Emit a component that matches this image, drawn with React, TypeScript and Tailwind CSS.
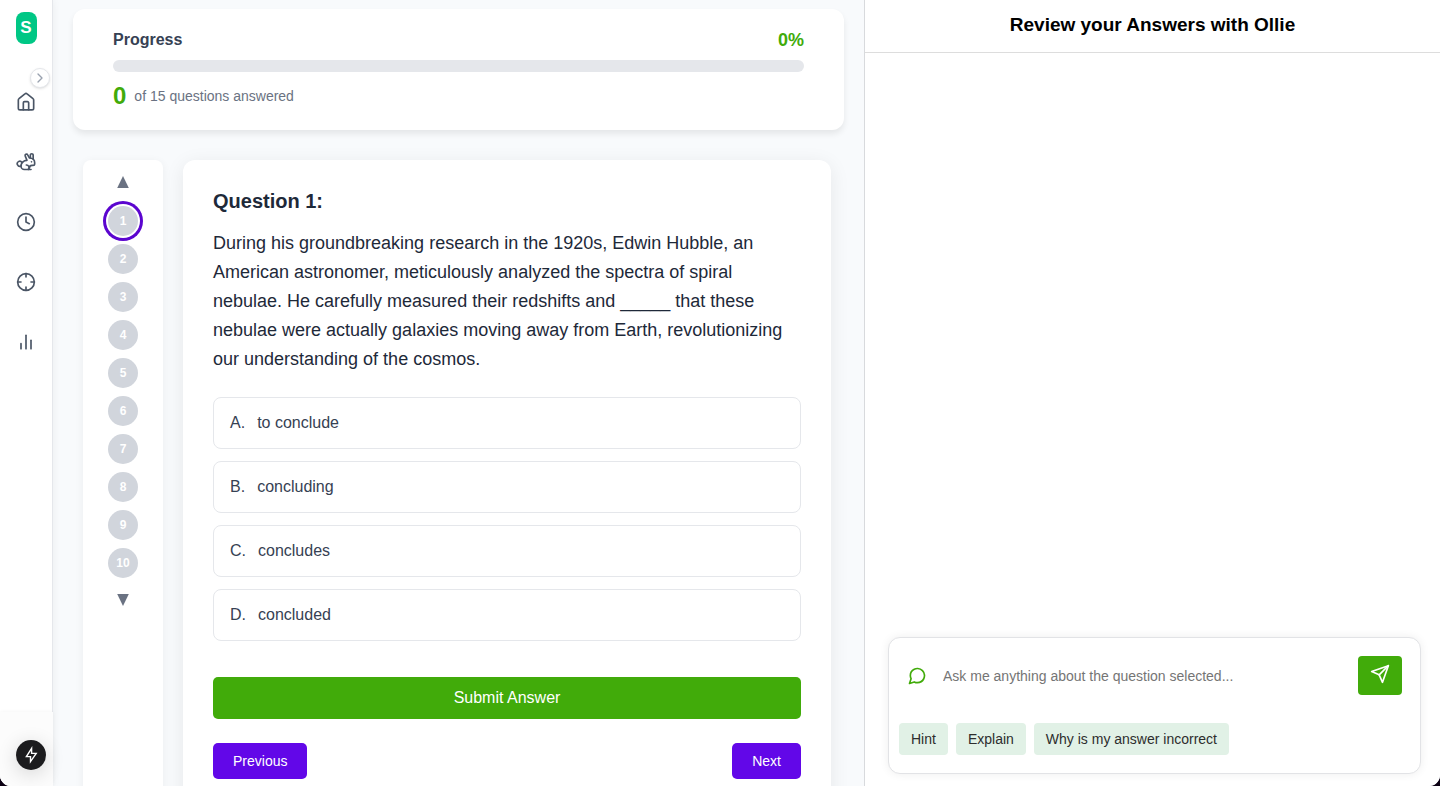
import { useState } from 'react';
import { FiBarChart2, FiChevronRight, FiClock, FiCrosshair, FiMessageCircle, FiSend } from 'react-icons/fi';

const options = [
  { letter: 'A', text: 'to conclude' },
  { letter: 'B', text: 'concluding' },
  { letter: 'C', text: 'concludes' },
  { letter: 'D', text: 'concluded' },
];

const questionNumbers = [1, 2, 3, 4, 5, 6, 7, 8, 9, 10];

function HomeIcon() {
  return (
    <svg viewBox="0 0 24 24" className="size-5" fill="none" stroke="currentColor" strokeWidth="2" strokeLinecap="round" strokeLinejoin="round">
      <path d="M2.8 9.6a2 2 0 0 1 .8-1.6l7.1-5.8a2 2 0 0 1 2.6 0l7.1 5.8a2 2 0 0 1 .8 1.6V19.4a2 2 0 0 1-2 2H4.8a2 2 0 0 1-2-2Z" />
      <path d="M8.8 21.2V13a1.4 1.4 0 0 1 1.4-1.4h3.6A1.4 1.4 0 0 1 15.2 13v8.2" />
    </svg>
  );
}

function RabbitIcon() {
  return (
    <svg viewBox="0 0 24 24" className="size-5" fill="none" stroke="currentColor" strokeWidth="2" strokeLinecap="round" strokeLinejoin="round">
      <path d="M18 21h-8a4 4 0 0 1-4-4 7 7 0 0 1 7-7h.2L11.1 5a1.6 1.6 0 0 1 2.9-1.5L16.2 7.2c3.6.2 6.2 2.5 6.2 5.8v1a2 2 0 0 1-2 2h-1.2a3 3 0 0 0-3 3" />
      <path d="M20.6 8.7V3.8a1.7 1.7 0 1 0-3.4 0V7" />
      <path d="M7 12.4a3 3 0 1 0-1.2 4.4" />
      <path d="M12.4 15.6a3.1 3.1 0 0 1 2.4 5.2" />
      <path d="M18.6 11.8h.01" />
    </svg>
  );
}

function BoltIcon() {
  return (
    <svg viewBox="0 0 20 20" className="size-5" fill="none" stroke="white" strokeWidth="1.4" strokeLinejoin="miter">
      <path d="M10.6 3.4 5.4 11.6H9.5V16.6L15.2 8.4H10.6Z" />
    </svg>
  );
}

function Sidebar() {
  const links = [
    { label: 'Home', icon: <HomeIcon /> },
    { label: 'Practice', icon: <RabbitIcon /> },
    { label: 'History', icon: <FiClock className="size-5" /> },
    { label: 'Goals', icon: <FiCrosshair className="size-5" /> },
    { label: 'Statistics', icon: <FiBarChart2 className="size-5" /> },
  ];
  return (
    <aside className="relative z-10 flex w-[53px] shrink-0 flex-col bg-white shadow-[0_0_8px_rgba(0,0,0,0.06)]">
      <div className="flex grow flex-col items-center border-r border-gray-200 pt-3">
        <a href="#" aria-label="Dashboard" className="flex h-8 w-[21px] items-center justify-center rounded-lg bg-[#00c785] text-[17px] font-bold text-white">
          S
        </a>
        <nav className="mt-12 flex flex-col gap-10 text-gray-600">
          {links.map((link) => (
            <a key={link.label} href="#" aria-label={link.label}>
              {link.icon}
            </a>
          ))}
        </nav>
      </div>
      <div className="flex h-[74px] shrink-0 items-end bg-[#fcfcfc] pb-4 pl-4 shadow-[0_0_4px_rgba(0,0,0,0.05)]">
        <button aria-label="Quick actions" className="flex size-[30px] items-center justify-center rounded-full bg-[#1c1c1e] shadow-[0_4px_20px_rgba(0,0,0,0.16)]">
          <BoltIcon />
        </button>
      </div>
      <button aria-label="Expand sidebar" className="absolute top-[68px] left-[30px] flex size-5 items-center justify-center rounded-full border border-gray-200 bg-white text-gray-400 shadow-sm">
        <FiChevronRight className="size-4 shrink-0" />
      </button>
    </aside>
  );
}

function ProgressCard() {
  return (
    <section className="rounded-xl bg-white px-10 pt-[19px] pb-[18px] shadow-[0_4px_6px_rgba(0,0,0,0.08)]">
      <div className="flex h-6 items-center justify-between">
        <h2 className="text-base font-bold text-gray-700">Progress</h2>
        <span className="text-lg font-bold text-[#41ab0a]">0%</span>
      </div>
      <div role="progressbar" aria-label="Progress" aria-valuenow={0} className="mt-2 h-3 rounded-full bg-gray-200" />
      <div className="mt-2 flex h-8 items-center gap-2">
        <span className="text-2xl font-bold text-[#41ab0a]">0</span>
        <span className="text-sm text-gray-500">of 15 questions answered</span>
      </div>
    </section>
  );
}

function QuestionNav({ current, onSelect }: { current: number; onSelect: (n: number) => void }) {
  return (
    <nav aria-label="Questions" className="flex w-20 shrink-0 flex-col items-center rounded-lg bg-white pt-2.5 shadow-[0_2px_10px_rgba(0,0,0,0.06)]">
      <button aria-label="Earlier questions" className="flex h-6 w-6 items-center justify-center text-gray-500">
        <svg viewBox="0 0 12 12" className="size-3" fill="currentColor"><path d="M6 0 11.8 12H.2Z" /></svg>
      </button>
      <div className="mt-3 flex flex-col gap-2">
        {questionNumbers.map((n) => (
          <button
            key={n}
            onClick={() => onSelect(n)}
            className={
              n === current
                ? 'flex size-[30px] items-center justify-center rounded-full bg-gray-300 text-xs font-bold text-white ring-3 ring-[#5b05cf] ring-offset-2'
                : 'flex size-[30px] items-center justify-center rounded-full bg-gray-300 text-xs font-bold text-white'
            }
          >
            {n}
          </button>
        ))}
      </div>
      <button aria-label="Later questions" className="mt-2.5 flex h-6 w-6 items-center justify-center text-gray-500">
        <svg viewBox="0 0 12 12" className="size-3" fill="currentColor"><path d="M6 12 11.8 0H.2Z" /></svg>
      </button>
    </nav>
  );
}

function QuestionCard() {
  return (
    <section className="grow rounded-xl bg-white p-[30px] shadow-[0_4px_20px_rgba(0,0,0,0.08)]">
      <h1 className="text-xl leading-[22px] font-bold text-gray-800">Question 1:</h1>
      <p className="mt-[17px] text-lg leading-[29px] text-gray-800">
        During his groundbreaking research in the 1920s, Edwin Hubble, an American astronomer, meticulously analyzed the
        spectra of spiral nebulae. He carefully measured their redshifts and _____ that these nebulae were actually
        galaxies moving away from Earth, revolutionizing our understanding of the cosmos.
      </p>
      <div className="mt-[23px] flex flex-col gap-3">
        {options.map((option) => (
          <button
            key={option.letter}
            className="flex h-[52px] items-center gap-3 rounded-lg border border-gray-200 bg-white px-4 text-left text-base text-gray-700"
          >
            <span>{option.letter}.</span>
            <span>{option.text}</span>
          </button>
        ))}
      </div>
      <button className="mt-9 h-[42px] w-full rounded-[5px] bg-[#41ab0a] text-base text-white">Submit Answer</button>
      <div className="mt-6 flex justify-between">
        <button className="h-9 rounded-[5px] bg-[#6207e8] px-5 text-sm text-white">Previous</button>
        <button className="h-9 rounded-[5px] bg-[#6207e8] px-5 text-sm text-white">Next</button>
      </div>
    </section>
  );
}

function ChatPanel() {
  return (
    <aside className="flex w-2/5 shrink-0 flex-col border-l border-[#d8dadd] bg-white">
      <h2 className="flex h-[53px] items-center justify-center border-b border-[#dddddd] pb-0.5 text-[19px] font-bold text-black">
        Review your Answers with Ollie
      </h2>
      <div className="grow" />
      <div className="mr-[19px] mb-3 ml-[23px] rounded-xl border border-[#e2e3e6] bg-white px-2.5 pt-[18px] pb-[18px] shadow-[0_0_10px_rgba(0,0,0,0.07)]">
        <div className="flex items-center pr-2 pl-2">
          <label htmlFor="ask" aria-label="Ask Ollie" className="text-[#41ab0a]">
            <FiMessageCircle className="size-5" />
          </label>
          <input
            id="ask"
            type="text"
            placeholder="Ask me anything about the question selected..."
            className="ml-4 h-9 min-w-0 grow bg-transparent text-sm text-gray-800 outline-none placeholder:text-[#757575]"
          />
          <button aria-label="Send" className="flex h-[39px] w-11 shrink-0 items-center justify-center rounded-[4px] bg-[#41ab0a] pb-1 text-white">
            <FiSend className="size-5" />
          </button>
        </div>
        <div className="mt-7 flex gap-2">
          {['Hint', 'Explain', 'Why is my answer incorrect'].map((label) => (
            <button key={label} className="h-8 rounded-[4px] bg-[#e1f1e6] px-3 text-sm text-[#2d2d2d]">
              {label}
            </button>
          ))}
        </div>
      </div>
    </aside>
  );
}

export default function App() {
  const [current, setCurrent] = useState(1);
  return (
    <div className="h-screen bg-[#0b0012] font-['Liberation_Sans',Arial,sans-serif]">
      <div className="flex h-full overflow-hidden rounded-b-[11px] bg-[#f8fafc]">
        <Sidebar />
        <main className="flex min-w-0 grow flex-col overflow-hidden px-5 pt-[9px]">
          <ProgressCard />
          <div className="mt-[30px] mr-[13px] ml-2.5 flex gap-5">
            <QuestionNav current={current} onSelect={setCurrent} />
            <QuestionCard />
          </div>
        </main>
        <ChatPanel />
      </div>
    </div>
  );
}
